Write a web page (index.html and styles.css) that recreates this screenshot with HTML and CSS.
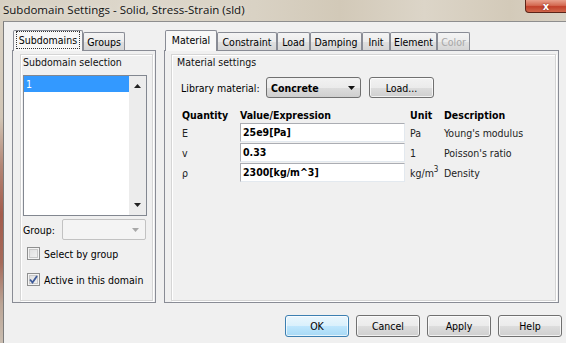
FILE: index.html
```html
<!DOCTYPE html>
<html>
<head>
<meta charset="utf-8">
<link rel="stylesheet" href="styles.css">
</head>
<body>
<div class="screen">
  <div class="titlebar">
    <span class="title">Subdomain Settings - Solid, Stress-Strain (sld)</span>
    <div class="close"><span>x</span></div>
  </div>
  <div class="body-row">
    <div class="frame-left"></div>
    <div class="client">
      <div class="panes">
        <div class="tabpane pane-left">
          <div class="tabs">
            <div class="tab selected w-subdomains"><span class="focus">Subdomains</span></div>
            <div class="tab w-groups">Groups</div>
          </div>
          <div class="panel">
            <div class="groupbox gb-left">
              <div class="gb-label">Subdomain selection</div>
              <div class="listbox">
                <div class="list-items">
                  <div class="list-item sel">1</div>
                </div>
                <div class="vscroll">
                  <svg width="7" height="4" viewBox="0 0 7 4"><path d="M0 4 L3.5 0 L7 4 Z" fill="#222"/></svg>
                  <svg width="7" height="4" viewBox="0 0 7 4"><path d="M0 0 L3.5 4 L7 0 Z" fill="#222"/></svg>
                </div>
              </div>
              <div class="group-row">
                <span class="group-label">Group:</span>
                <div class="combo disabled">
                  <svg width="7" height="4" viewBox="0 0 7 4"><path d="M0 0 L3.5 4 L7 0 Z" fill="#a8a8a8"/></svg>
                </div>
              </div>
              <label class="check first">
                <span class="box"></span>
                <span>Select by group</span>
              </label>
              <label class="check second">
                <span class="box"><svg width="9" height="9" viewBox="0 0 9 9"><path d="M1 4.5 L3.5 7.5 L8 1" fill="none" stroke="#3d5a99" stroke-width="1.8"/></svg></span>
                <span>Active in this domain</span>
              </label>
            </div>
          </div>
        </div>
        <div class="tabpane pane-right">
          <div class="tabs">
            <div class="tab selected w-material">Material</div>
            <div class="tab w-constraint">Constraint</div>
            <div class="tab w-load">Load</div>
            <div class="tab w-damping">Damping</div>
            <div class="tab w-init">Init</div>
            <div class="tab w-element">Element</div>
            <div class="tab w-color disabled-tab">Color</div>
          </div>
          <div class="panel">
            <div class="groupbox gb-right">
              <div class="gb-label">Material settings</div>
              <div class="lib-row">
                <span class="lib-label">Library material:</span>
                <div class="combo mat-combo">
                  <span class="combo-text">Concrete</span>
                  <svg width="7" height="4" viewBox="0 0 7 4"><path d="M0 0 L3.5 4 L7 0 Z" fill="#111"/></svg>
                </div>
                <div class="btn load-btn">Load...</div>
              </div>
              <div class="qtable">
                <div class="th">Quantity</div>
                <div class="th">Value/Expression</div>
                <div class="th unit">Unit</div>
                <div class="th">Description</div>

                <div class="td">E</div>
                <div class="field">25e9[Pa]</div>
                <div class="td unit">Pa</div>
                <div class="td">Young's modulus</div>

                <div class="td">v</div>
                <div class="field">0.33</div>
                <div class="td unit">1</div>
                <div class="td">Poisson's ratio</div>

                <div class="td">ρ</div>
                <div class="field">2300[kg/m^3]</div>
                <div class="td unit">kg/m<sup>3</sup></div>
                <div class="td">Density</div>
              </div>
            </div>
          </div>
        </div>
      </div>
      <div class="buttons">
        <div class="btn default">OK</div>
        <div class="btn">Cancel</div>
        <div class="btn">Apply</div>
        <div class="btn">Help</div>
      </div>
    </div>
  </div>
</div>
</body>
</html>
```
FILE: styles.css
```css
html, body {
  margin: 0;
  padding: 0;
}
body {
  width: 566px;
  height: 343px;
  overflow: hidden;
  background: #f0f0f0;
  font-family: "DejaVu Sans Condensed", "Liberation Sans", sans-serif;
  font-size: 10.5px;
  color: #000;
}
.screen {
  display: flex;
  flex-direction: column;
  height: 343px;
}
.titlebar {
  height: 21px;
  flex: none;
  display: flex;
  align-items: flex-start;
  padding-left: 3px;
  background: linear-gradient(to right, #d7d0c2 0%, #ddd7cb 25%, #d9d2c4 45%, #d2c9b8 60%, #dcd5c8 75%, #d3cab9 90%, #d9d2c5 100%);
}
.title {
  font-family: "Open Sans", "Noto Sans", sans-serif;
  font-size: 11.5px;
  line-height: 20px;
  color: #111;
  text-shadow: 0 0 6px rgba(255,255,255,0.7);
}
.close {
  margin-left: auto;
  width: 42px;
  height: 13px;
  margin-right: -1px;
  box-sizing: border-box;
  border: 1px solid #5c2418;
  border-top: none;
  border-radius: 0 0 0 4px;
  background: linear-gradient(to bottom, #e8a08c 0%, #d46a52 45%, #c2402a 55%, #d0684c 100%);
  display: flex;
  justify-content: center;
  align-items: center;
}
.close span {
  color: #fff;
  font-family: "DejaVu Sans", sans-serif;
  font-weight: bold;
  font-size: 10px;
  line-height: 11px;
  text-shadow: 0 0 2px #7a2010;
}
.body-row {
  flex: 1;
  display: flex;
}
.frame-left {
  width: 3px;
  flex: none;
  background: linear-gradient(to bottom, #d8d0c2 0%, #d2c6b6 30%, #b38676 45%, #a45c4c 60%, #a56a5a 75%, #bba596 88%, #c9bdb0 100%);
}
.client {
  flex: 1;
  border-top: 1px solid #8e8e8e;
  border-left: 1px solid #7c7c7c;
  background: #f0f0f0;
  padding: 8px 7px 0 8px;
  display: flex;
  flex-direction: column;
}
.panes {
  display: flex;
  gap: 8px;
  height: 273px;
}
.tabpane {
  display: flex;
  flex-direction: column;
}
.pane-left {
  width: 144px;
}
.pane-right {
  flex: 1;
}
.tabs {
  height: 20px;
  display: flex;
  align-items: flex-end;
  padding-left: 1px;
}
.tab {
  height: 18px;
  box-sizing: border-box;
  border: 1px solid #898c95;
  border-bottom: none;
  border-radius: 2px 2px 0 0;
  background: linear-gradient(to bottom, #f4f4f4 0%, #ececec 50%, #e0e0e0 51%, #d6d6d6 100%);
  display: flex;
  justify-content: center;
  align-items: center;
  line-height: 14px;
  padding-top: 1px;
}
.tab.selected {
  height: 21px;
  margin-bottom: -1px;
  background: #f7f7f7;
  position: relative;
  z-index: 1;
  padding-top: 0;
  padding-bottom: 2px;
}
.focus {
  outline: 1px dotted #333;
  padding: 1px 2px;
}
.disabled-tab {
  color: #a7a7a7;
}
.w-subdomains { width: 70px; }
.w-groups { width: 42px; }
.w-material { width: 52px; }
.w-constraint { width: 60px; }
.w-load { width: 33px; }
.w-damping { width: 52px; }
.w-init { width: 28px; }
.w-element { width: 47px; }
.w-color { width: 33px; }

.panel {
  flex: 1;
  border: 1px solid #898c95;
  background: #f0f0f0;
  display: flex;
  flex-direction: column;
}
.groupbox {
  flex: 1;
  border: 1px solid #d5d5d5;
  box-shadow: inset 1px 1px 0 #ffffff, 1px 1px 0 #ffffff;
  display: flex;
  flex-direction: column;
}
.gb-left {
  margin: 3px 2px 1px 7px;
  padding-left: 2px;
}
.gb-right {
  margin: 3px 2px 1px 6px;
  padding-left: 5px;
}
.gb-label {
  line-height: 14px;
  height: 14px;
  color: #111;
}
.listbox {
  margin-top: 6px;
  width: 124px;
  height: 141px;
  box-sizing: border-box;
  border: 1px solid #828790;
  background: #fff;
  display: flex;
}
.list-items {
  flex: 1;
}
.list-item {
  height: 16px;
  line-height: 16px;
  padding-left: 2px;
}
.list-item.sel {
  background: #3399ff;
  color: #fff;
}
.vscroll {
  width: 17px;
  background: #ececec;
  display: flex;
  flex-direction: column;
  justify-content: space-between;
  align-items: center;
  padding: 8px 0 8px;
}
.group-row {
  margin-top: 3px;
  height: 21px;
  display: flex;
  align-items: center;
}
.group-label {
  width: 39px;
}
.combo {
  box-sizing: border-box;
  height: 21px;
  border: 1px solid #707070;
  border-radius: 3px;
  background: linear-gradient(to bottom, #f2f2f2 0%, #ebebeb 50%, #dddddd 51%, #cfcfcf 100%);
  display: flex;
  align-items: center;
  justify-content: flex-end;
  padding-right: 6px;
}
.combo.disabled {
  width: 84px;
  border-color: #c2c2c2;
  background: #f4f4f4;
  border-radius: 2px;
}
.check {
  display: flex;
  align-items: center;
  height: 13px;
  margin-left: 4px;
  gap: 4px;
}
.check.first {
  margin-top: 7px;
}
.check.second {
  margin-top: 13px;
}
.box {
  width: 13px;
  height: 13px;
  box-sizing: border-box;
  border: 1px solid #8e8f8f;
  background: linear-gradient(135deg, #dcdcdc 0%, #f4f4f4 100%);
  box-shadow: inset 0 0 0 1px #f4f4f4, inset 0 0 0 2px #c8c8c8;
  display: flex;
  align-items: center;
  justify-content: center;
}
.lib-row {
  margin-top: 8px;
  margin-left: 4px;
  height: 21px;
  display: flex;
  align-items: center;
}
.lib-label {
  width: 85px;
}
.mat-combo {
  width: 95px;
  justify-content: space-between;
  padding-left: 4px;
  padding-right: 5px;
}
.combo-text {
  font-weight: bold;
}
.btn {
  box-sizing: border-box;
  height: 21px;
  border: 1px solid #707070;
  border-radius: 3px;
  background: linear-gradient(to bottom, #f2f2f2 0%, #ebebeb 50%, #dddddd 51%, #cfcfcf 100%);
  box-shadow: inset 0 0 0 1px rgba(255,255,255,0.7);
  display: flex;
  align-items: center;
  justify-content: center;
}
.load-btn {
  width: 65px;
  margin-left: 8px;
}
.qtable {
  margin-top: 10px;
  margin-left: 5px;
  display: grid;
  grid-template-columns: 58px 165px 39px 1fr;
  grid-template-rows: 14px 19px 19px 19px;
  row-gap: 1px;
  align-items: center;
}
.th {
  font-weight: bold;
  line-height: 14px;
}
.td {
  line-height: 14px;
  color: #222;
}
.unit {
  padding-left: 5px;
}
.field {
  height: 19px;
  box-sizing: border-box;
  border: 1px solid #abadb3;
  border-color: #abadb3 #e3e9ef #e3e9ef #abadb3;
  background: #fff;
  font-weight: bold;
  line-height: 17px;
  padding-left: 2px;
}
sup {
  font-size: 8px;
  vertical-align: 5px;
  line-height: 0;
}
.buttons {
  margin-top: 12px;
  margin-right: -3px;
  display: flex;
  justify-content: flex-end;
  gap: 7px;
}
.buttons .btn {
  width: 64px;
  height: 22px;
}
.btn.default {
  border-color: #3c7fb1;
  background: linear-gradient(to bottom, #eaf6fd 0%, #d9f0fc 50%, #bee6fd 51%, #a7d9f5 100%);
}
```
